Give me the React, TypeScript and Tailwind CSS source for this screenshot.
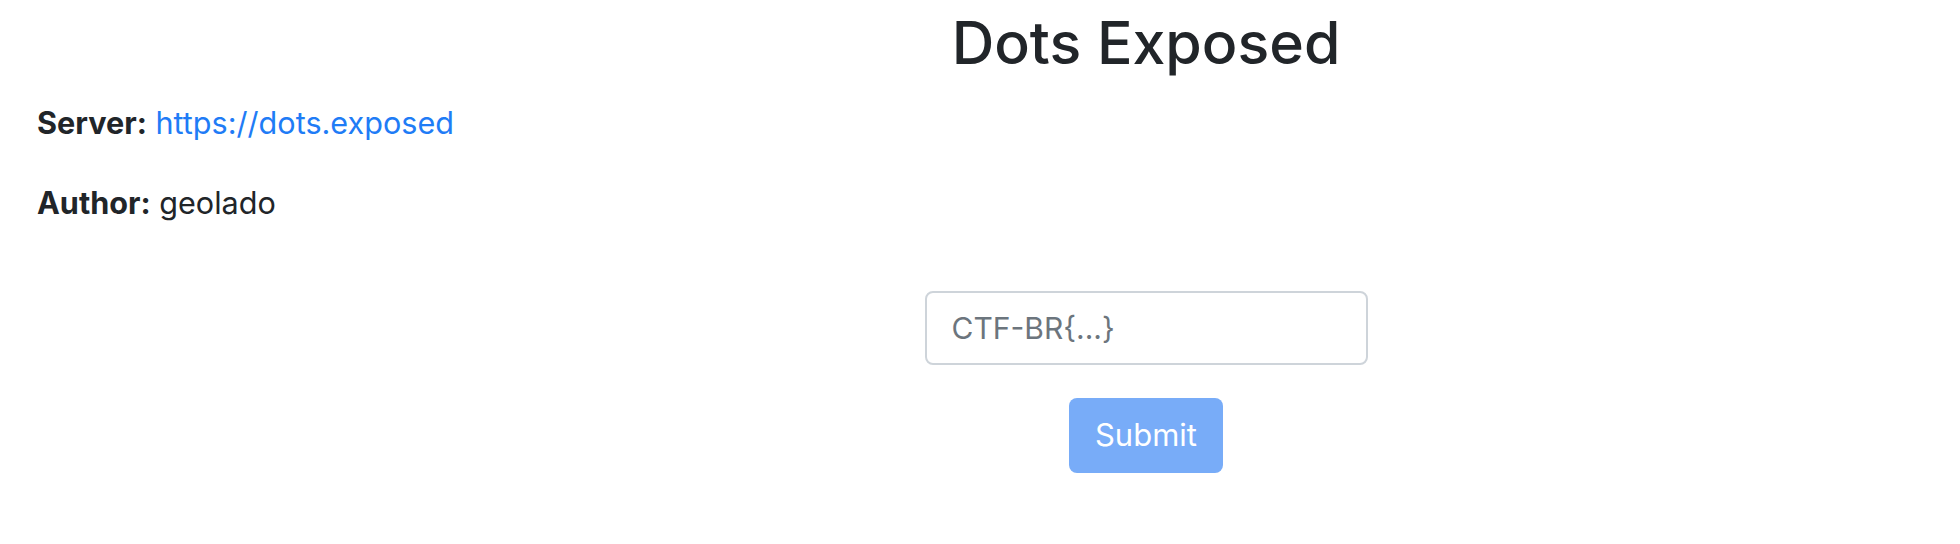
export default function App() {
  return (
    <div className="min-h-screen bg-white text-[#212529] font-['Inter','Liberation_Sans',sans-serif]">
      <div className="flex justify-center pl-[332px]">
        <h1 className="mt-[8px] text-[59px] font-medium leading-[1.2]">Dots Exposed</h1>
      </div>

      <div className="mt-[21px] px-[37px] text-[30.6px] leading-[45px]">
        <p>
          <strong className="font-bold">Server:</strong>{" "}
          <a href="#" className="text-[#1f7cf6]">
            https://dots.exposed
          </a>
        </p>
        <p className="mt-[35px]">
          <strong className="font-bold">Author:</strong> geolado
        </p>
      </div>

      <form className="mt-[66px] flex flex-col items-center gap-[33px] pl-[332px]">
        <input
          type="text"
          placeholder="CTF-BR{...}"
          className="h-[74px] w-[443px] rounded-[8px] border-2 border-[#ced4da] px-[25px] text-[30px] text-[#495057] placeholder:text-[#6c757d] outline-none"
        />
        <button
          type="button"
          disabled
          className="h-[75px] w-[154px] rounded-[8px] bg-[#78acf8] text-[31px] text-white"
        >
          Submit
        </button>
      </form>
    </div>
  );
}
